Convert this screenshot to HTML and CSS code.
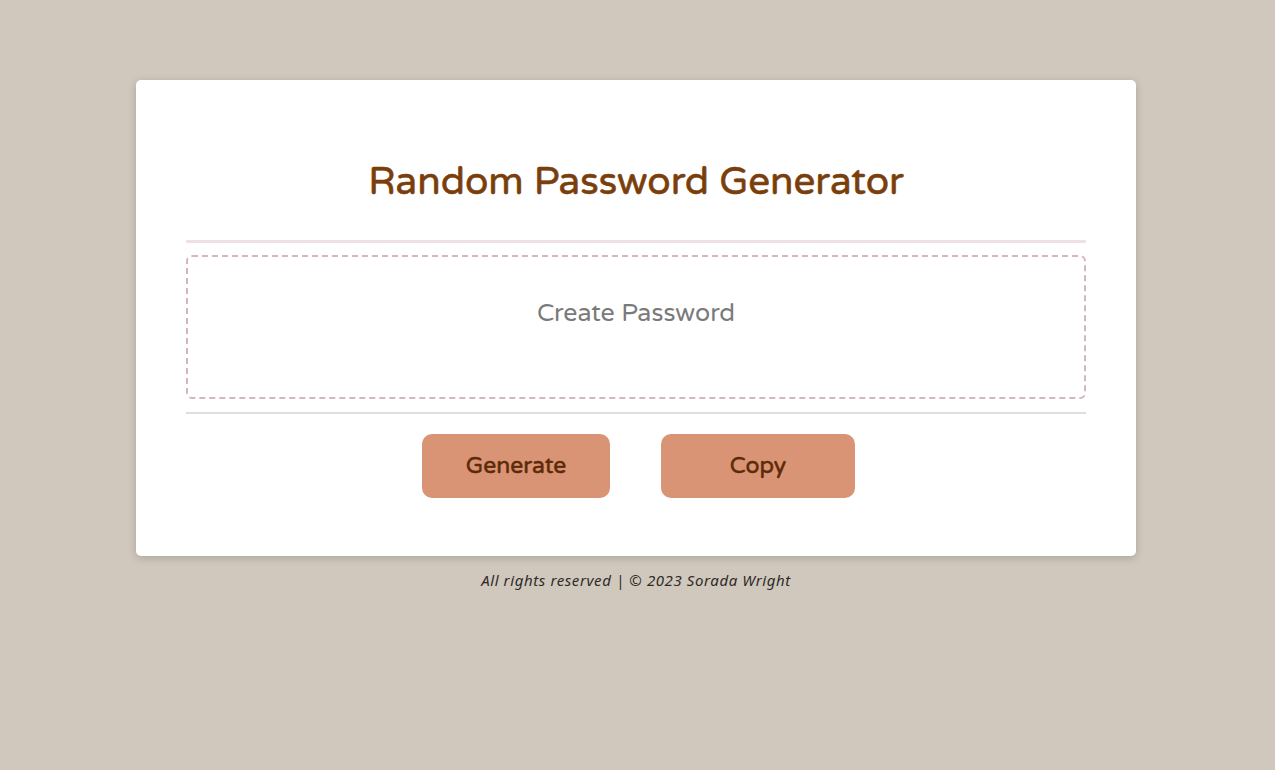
FILE: index.html
```html
<!DOCTYPE html>
<html lang="en">
<head>
<meta charset="utf-8">
<title>Password Generator</title>
<link rel="stylesheet" href="styles.css">
</head>
<body>
<main class="wrapper">
  <section class="card">
    <header class="card-header">
      <h1 class="title">Random Password Generator</h1>
    </header>
    <div class="card-body">
      <textarea class="password" readonly placeholder="Create Password"></textarea>
    </div>
    <div class="card-footer">
      <button class="btn btn-generate">Generate</button>
      <button class="btn btn-copy">Copy</button>
    </div>
  </section>
  <p class="footer">All rights reserved | © 2023 Sorada Wright</p>
</main>
</body>
</html>
```
FILE: styles.css
```css
* { box-sizing: border-box; }
html, body { height: 100%; }
body {
  margin: 0;
  background: #d0c8bd;
  font-family: "Varela Round", "Noto Sans", "DejaVu Sans", sans-serif;
}
.wrapper {
  display: flex;
  flex-direction: column;
  align-items: center;
  padding-top: 80px;
  padding-right: 3px;
}
.card {
  width: 1000px;
  height: 476px;
  background: #fff;
  border-radius: 5px;
  box-shadow: 0 2px 8px rgba(0,0,0,0.18);
  padding: 0 50px;
  display: flex;
  flex-direction: column;
}
.card-header {
  height: 163px;
  border-bottom: 3px solid #efe1e3;
  display: flex;
  align-items: flex-end;
  justify-content: center;
  padding-bottom: 39px;
}
.title {
  margin: 0;
  font-size: 38.5px;
  font-weight: 400;
  color: #7a3e0c;
  -webkit-text-stroke: 0.6px #7a3e0c;
  line-height: 1;
}
.card-body {
  padding: 12px 0 13px;
  border-bottom: 2px solid #e2dcdc;
}
.password {
  display: block;
  width: 100%;
  height: 144px;
  resize: none;
  border: 2px dashed #d4b6bd;
  border-radius: 6px;
  padding: 41px 20px 0;
  text-align: center;
  font-family: inherit;
  font-size: 25px;
  color: #777;
  background: #fff;
  outline: none;
}
.password::placeholder { color: #7a7a7a; }
.card-footer {
  display: flex;
  justify-content: center;
  gap: 51px;
  padding-top: 20px;
  padding-left: 5px;
}
.btn {
  height: 64px;
  border: none;
  border-radius: 10px;
  background: #d99375;
  color: #5c2a08;
  font-family: inherit;
  font-size: 23px;
  font-weight: 400;
  -webkit-text-stroke: 0.5px #5c2a08;
  cursor: pointer;
}
.btn-generate { width: 188px; }
.btn-copy { width: 194px; }
.footer {
  margin: 14px 0 0;
  font-family: "Noto Sans", "Open Sans", sans-serif;
  font-style: italic;
  font-size: 15px;
  letter-spacing: 0.6px;
  color: #2e2a28;
}
```
